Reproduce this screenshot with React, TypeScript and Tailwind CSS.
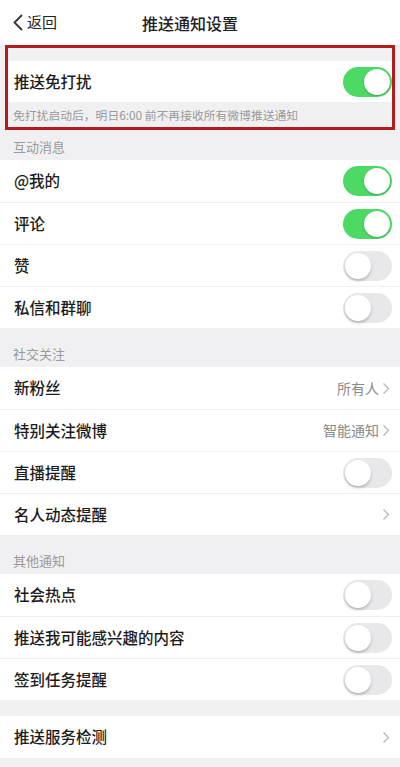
import React from 'react'

const font = { fontFamily: '"Noto Sans CJK SC", "Noto Sans", sans-serif' }

function Toggle({ on }: { on: boolean }) {
  return on ? (
    <div className="w-[49px] h-[30px] rounded-full bg-[#4cd964] p-[2px] flex justify-end">
      <div className="w-[26px] h-[26px] rounded-full bg-white shadow-[0_1px_2px_rgba(0,0,0,0.25)]" />
    </div>
  ) : (
    <div className="w-[49px] h-[30px] rounded-full bg-[#e8e8ea] p-[2px] flex justify-start">
      <div className="w-[26px] h-[26px] rounded-full bg-white shadow-[0_2px_3px_rgba(0,0,0,0.22)]" />
    </div>
  )
}

function Chevron() {
  return (
    <svg width="8" height="13" viewBox="0 0 8 13" className="ml-[3px]">
      <path d="M1.5 1.5 L6.5 6.5 L1.5 11.5" fill="none" stroke="#b5b5b5" strokeWidth="1.2" />
    </svg>
  )
}

type Row = { label: string; toggle?: boolean; value?: string; link?: boolean }

function Section({ rows }: { rows: Row[] }) {
  return (
    <div className="bg-white">
      {rows.map((r, i) => (
        <div
          key={r.label}
          className={`h-[42px] flex items-center justify-between pl-[14px] pr-[8px] ${i > 0 ? 'border-t border-[#efefef]' : ''}`}
        >
          <span className="text-[15.5px] font-medium text-[#1c1c1c]">{r.label}</span>
          {r.toggle !== undefined && <Toggle on={r.toggle} />}
          {r.link && (
            <div className="flex items-center pr-[2px]">
              {r.value && <span className="text-[14px] text-[#8a8a8a]">{r.value}</span>}
              <Chevron />
            </div>
          )}
        </div>
      ))}
    </div>
  )
}

function Title({ text, first }: { text: string; first?: boolean }) {
  return (
    <div className={`${first ? 'h-[30px] pt-[7px]' : 'h-[39px] pt-[16px]'} pl-[13px] text-[13px] text-[#9a9a9a]`}>
      {text}
    </div>
  )
}

export default function App() {
  return (
    <div style={font} className="w-[400px] h-[767px] overflow-hidden bg-[#f0f0f2]">
      {/* Nav bar */}
      <div className="h-[45px] bg-white flex items-center">
        <svg width="12" height="17" viewBox="0 0 12 17" className="ml-[12px]">
          <path d="M10 1 L2.5 8.5 L10 16" fill="none" stroke="#333" strokeWidth="1.8" />
        </svg>
        <span className="ml-[3px] text-[15px] text-[#222]">返回</span>
        <span className="ml-[85px] text-[16px] font-medium text-[#222]">推送通知设置</span>
      </div>

      {/* highlighted do-not-disturb block */}
      <div className="mx-[5px] border-[3px] border-[#b31b1f]">
        <div className="h-[13px]" />
        <div className="h-[41px] bg-white flex items-center justify-between pl-[6px] pr-[0px]">
          <span className="text-[15.5px] font-medium text-[#1c1c1c]">推送免打扰</span>
          <Toggle on />
        </div>
        <div className="h-[25px] flex items-center pl-[5px] text-[11.8px] text-[#9a9a9a]">
          免打扰启动后，明日6:00 前不再接收所有微博推送通知
        </div>
      </div>

      <Title text="互动消息" first />
      <Section
        rows={[
          { label: '@我的', toggle: true },
          { label: '评论', toggle: true },
          { label: '赞', toggle: false },
          { label: '私信和群聊', toggle: false },
        ]}
      />

      <Title text="社交关注" />
      <Section
        rows={[
          { label: '新粉丝', link: true, value: '所有人' },
          { label: '特别关注微博', link: true, value: '智能通知' },
          { label: '直播提醒', toggle: false },
          { label: '名人动态提醒', link: true },
        ]}
      />

      <Title text="其他通知" />
      <Section
        rows={[
          { label: '社会热点', toggle: false },
          { label: '推送我可能感兴趣的内容', toggle: false },
          { label: '签到任务提醒', toggle: false },
        ]}
      />

      <div className="h-[16px]" />
      <Section rows={[{ label: '推送服务检测', link: true }]} />
    </div>
  )
}
